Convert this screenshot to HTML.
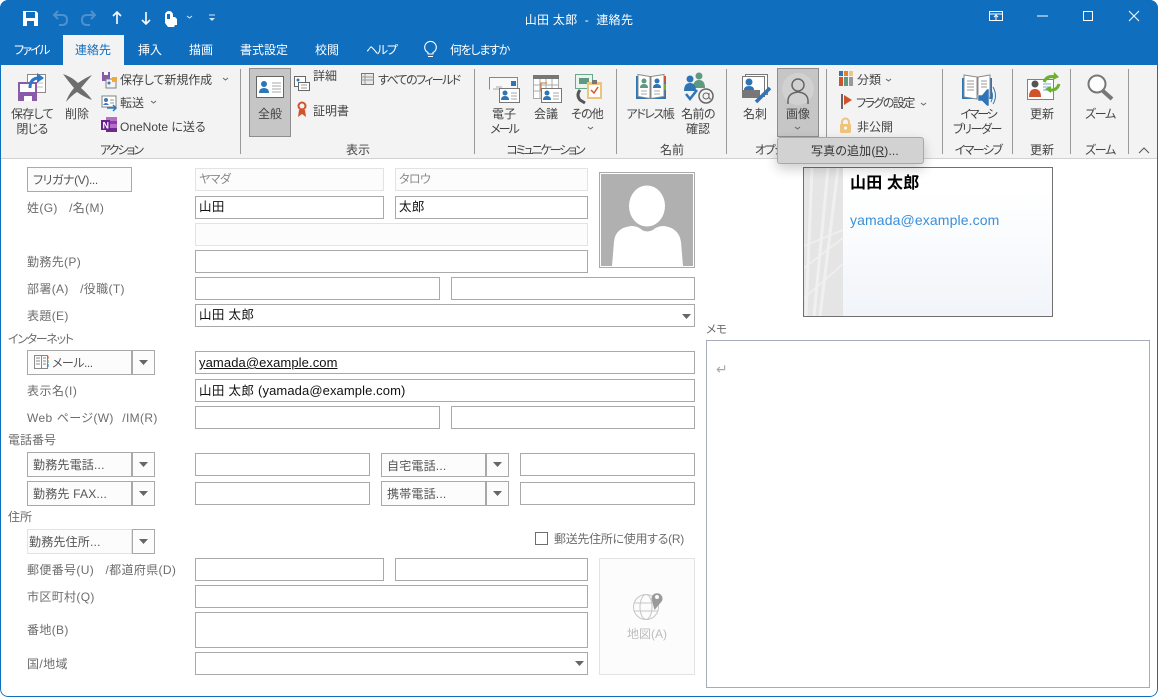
<!DOCTYPE html>
<html lang="ja"><head><meta charset="utf-8"><title>山田 太郎 - 連絡先</title>
<style>
html,body{margin:0;padding:0;background:#fff}
body{width:1158px;height:697px;overflow:hidden;position:relative;font-family:"Liberation Sans","Noto Sans CJK JP",sans-serif;font-size:12px;color:#444;font-feature-settings:"palt"}
#win{position:absolute;left:0;top:0;width:1158px;height:697px;background:#fff;border-radius:8px;overflow:hidden;box-sizing:border-box}
#win:after{content:"";position:absolute;inset:0;border:1px solid #106ebe;border-radius:8px;pointer-events:none}
.abs{position:absolute;box-sizing:border-box}
.t{position:absolute;white-space:nowrap;line-height:16px;height:16px}
.c{text-align:center;width:120px}
.w{color:#fff}
.l{color:#6d6d6d;letter-spacing:.35px;word-spacing:2px}
.i{position:absolute;box-sizing:border-box;border:1px solid #a9a9a9;background:#fff;color:#111;padding:0 3px;line-height:21px;white-space:nowrap;font-size:12.5px;letter-spacing:.35px}
.i span{font-size:13px;letter-spacing:.1px}
.d{border-color:#e3e3e3;background:#fcfcfc;color:#8a8a8a;font-size:12px;letter-spacing:-.6px}
.b{position:absolute;box-sizing:border-box;border:1px solid #a9a9a9;background:#fcfcfc;color:#555;line-height:24px;padding-left:5px;white-space:nowrap;letter-spacing:.2px}
.s{position:absolute;top:69px;width:1px;height:85px;background:#999}
.sel{position:absolute;box-sizing:border-box;background:#c6c6c6;border:1px solid #8e8e8e}
</style></head><body>
<div id="win">
<div class="abs" style="left:0;top:0;width:1158px;height:65px;background:#106ebe"></div>
<div class="abs" style="left:63px;top:35px;width:61px;height:31px;background:#f3f3f3"></div>
<div class="abs" style="left:1px;top:65px;width:1156px;height:94px;background:#f3f3f3;border-bottom:1px solid #d2d2d2"></div>

<div class="t w c" style="left:519px;top:12px;letter-spacing:.3px">山田 太郎 &nbsp;-&nbsp; 連絡先</div>
<div class="t w" style="left:14px;top:42px;letter-spacing:-1.7px">ファイル</div>
<div class="t" style="left:75px;top:42px;color:#106ebe">連絡先</div>
<div class="t w" style="left:138px;top:42px">挿入</div>
<div class="t w" style="left:189px;top:42px">描画</div>
<div class="t w" style="left:240px;top:42px">書式設定</div>
<div class="t w" style="left:315px;top:42px">校閲</div>
<div class="t w" style="left:366px;top:42px;letter-spacing:-1.3px">ヘルプ</div>
<div class="t w" style="left:450px;top:42px;letter-spacing:-1.3px">何をしますか</div>

<div class="sel" style="left:249px;top:68px;width:42px;height:69px"></div>
<div class="sel" style="left:777px;top:68px;width:42px;height:69px"></div>
<div class="s" style="left:240px"></div><div class="s" style="left:474px"></div><div class="s" style="left:616px"></div><div class="s" style="left:726px"></div><div class="s" style="left:826px"></div><div class="s" style="left:942px"></div><div class="s" style="left:1012px"></div><div class="s" style="left:1070px"></div><div class="s" style="left:1128px"></div>

<div class="t c" style="left:-28px;top:106px;letter-spacing:-.7px">保存して</div>
<div class="t c" style="left:-28px;top:121px;letter-spacing:-.7px">閉じる</div>
<div class="t c" style="left:17px;top:106px">削除</div>
<div class="t" style="left:120px;top:72px;letter-spacing:-.1px">保存して新規作成</div>
<div class="t" style="left:120px;top:95px">転送</div>
<div class="t" style="left:120px;top:119px">OneNote に送る</div>
<div class="t c" style="left:210px;top:106px">全般</div>
<div class="t" style="left:313px;top:68px">詳細</div>
<div class="t" style="left:313px;top:103px">証明書</div>
<div class="t" style="left:378px;top:72px;letter-spacing:-1.6px">すべてのフィールド</div>
<div class="t c" style="left:444px;top:106px">電子</div>
<div class="t c" style="left:444px;top:121px;letter-spacing:-2px">メール</div>
<div class="t c" style="left:486px;top:106px">会議</div>
<div class="t c" style="left:527px;top:106px;letter-spacing:-.8px">その他</div>
<div class="t c" style="left:590px;top:106px;letter-spacing:-1.4px">アドレス帳</div>
<div class="t c" style="left:638px;top:106px;letter-spacing:-.6px">名前の</div>
<div class="t c" style="left:638px;top:121px">確認</div>
<div class="t c" style="left:695px;top:106px">名刺</div>
<div class="t c" style="left:738px;top:106px">画像</div>
<div class="t" style="left:857px;top:72px">分類</div>
<div class="t" style="left:856px;top:95px;letter-spacing:-1.5px">フラグの設定</div>
<div class="t" style="left:857px;top:119px">非公開</div>
<div class="t c" style="left:918px;top:106px;letter-spacing:-2.2px">イマーシ</div>
<div class="t c" style="left:917px;top:121px;letter-spacing:-1.4px">ブリーダー</div>
<div class="t c" style="left:982px;top:106px">更新</div>
<div class="t c" style="left:1040px;top:106px;letter-spacing:-1.3px">ズーム</div>

<div class="t c" style="left:61px;top:142px;letter-spacing:-2px">アクション</div>
<div class="t c" style="left:298px;top:142px">表示</div>
<div class="t c" style="left:485px;top:142px;letter-spacing:-2.1px">コミュニケーション</div>
<div class="t c" style="left:612px;top:142px">名前</div>
<div class="t" style="left:755px;top:142px;letter-spacing:-1.5px">オプション</div>
<div class="t c" style="left:918px;top:142px;letter-spacing:-1.6px">イマーシブ</div>
<div class="t c" style="left:982px;top:142px">更新</div>
<div class="t c" style="left:1040px;top:142px;letter-spacing:-1.3px">ズーム</div>

<!-- Form -->
<div class="b" style="left:27px;top:167px;width:105px;height:25px;letter-spacing:-.4px">フリガナ(V)...</div>
<div class="i d" style="left:195px;top:168px;width:189px;height:23px">ヤマダ</div>
<div class="i d" style="left:395px;top:168px;width:193px;height:23px">タロウ</div>
<div class="t l" style="left:27px;top:200px">姓(G) &nbsp;/名(M)</div>
<div class="i" style="left:195px;top:196px;width:189px;height:23px">山田</div>
<div class="i" style="left:395px;top:196px;width:193px;height:23px">太郎</div>
<div class="i d" style="left:195px;top:223px;width:393px;height:23px"></div>
<div class="t l" style="left:27px;top:254px">勤務先(P)</div>
<div class="i" style="left:195px;top:250px;width:393px;height:23px"></div>
<div class="t l" style="left:27px;top:281px">部署(A) &nbsp;/役職(T)</div>
<div class="i" style="left:195px;top:277px;width:245px;height:23px"></div>
<div class="i" style="left:451px;top:277px;width:244px;height:23px"></div>
<div class="t l" style="left:27px;top:308px">表題(E)</div>
<div class="i" style="left:195px;top:304px;width:500px;height:23px">山田 太郎</div>
<div class="t" style="left:8px;top:331px;color:#6d6d6d;letter-spacing:-1.3px">インターネット</div>
<div class="t" style="left:706px;top:322px;color:#6d6d6d;font-size:11.5px">メモ</div>

<div class="b" style="left:27px;top:350px;width:105px;height:25px;padding-left:24px;letter-spacing:-.5px">メール...</div>
<div class="b" style="left:132px;top:350px;width:23px;height:25px"></div>
<div class="i" style="left:195px;top:351px;width:500px;height:23px"><span style="text-decoration:underline">yamada@example.com</span></div>
<div class="t l" style="left:27px;top:383px;letter-spacing:.5px">表示名(I)</div>
<div class="i" style="left:195px;top:379px;width:500px;height:23px">山田 太郎 <span>(yamada@example.com)</span></div>
<div class="t l" style="left:27px;top:410px;word-spacing:.6px">Web ページ(W) &nbsp;/IM(R)</div>
<div class="i" style="left:195px;top:406px;width:245px;height:23px"></div>
<div class="i" style="left:451px;top:406px;width:244px;height:23px"></div>
<div class="t" style="left:8px;top:432px;color:#6d6d6d">電話番号</div>

<div class="b" style="left:27px;top:452px;width:105px;height:25px">勤務先電話...</div>
<div class="b" style="left:132px;top:452px;width:23px;height:25px"></div>
<div class="i" style="left:195px;top:453px;width:175px;height:23px"></div>
<div class="b" style="left:381px;top:453px;width:105px;height:24px">自宅電話...</div>
<div class="b" style="left:486px;top:453px;width:23px;height:24px"></div>
<div class="i" style="left:520px;top:453px;width:175px;height:23px"></div>
<div class="b" style="left:27px;top:481px;width:105px;height:25px">勤務先 FAX...</div>
<div class="b" style="left:132px;top:481px;width:23px;height:25px"></div>
<div class="i" style="left:195px;top:482px;width:175px;height:23px"></div>
<div class="b" style="left:381px;top:481px;width:105px;height:25px">携帯電話...</div>
<div class="b" style="left:486px;top:481px;width:23px;height:25px"></div>
<div class="i" style="left:520px;top:482px;width:175px;height:23px"></div>
<div class="t" style="left:8px;top:509px;color:#6d6d6d">住所</div>

<div class="b" style="left:27px;top:529px;width:105px;height:25px;border-color:#e3e3e3;padding-left:1px">勤務先住所...</div>
<div class="b" style="left:132px;top:529px;width:23px;height:25px"></div>
<div class="abs" style="left:535px;top:532px;width:13px;height:13px;border:1px solid #6d6d6d;background:#fff"></div>
<div class="t" style="left:554px;top:531px;color:#6d6d6d;letter-spacing:-.3px">郵送先住所に使用する(R)</div>
<div class="t l" style="left:27px;top:562px">郵便番号(U) &nbsp;/都道府県(D)</div>
<div class="i" style="left:195px;top:558px;width:189px;height:23px"></div>
<div class="i" style="left:395px;top:558px;width:193px;height:23px"></div>
<div class="t l" style="left:27px;top:589px">市区町村(Q)</div>
<div class="i" style="left:195px;top:585px;width:393px;height:23px"></div>
<div class="t l" style="left:27px;top:622px">番地(B)</div>
<div class="i" style="left:195px;top:612px;width:393px;height:36px"></div>
<div class="t l" style="left:27px;top:656px;letter-spacing:.4px">国/地域</div>
<div class="i" style="left:195px;top:652px;width:393px;height:23px"></div>
<div class="abs" style="left:599px;top:558px;width:96px;height:117px;border:1px solid #e3e3e3;background:#fcfcfc"></div>
<div class="t c" style="left:587px;top:626px;color:#bdbdbd">地図(A)</div>

<!-- Photo -->
<div class="abs" style="left:599px;top:172px;width:96px;height:96px;border:1px solid #aaa;background:#fff;padding:1px">
<svg width="92" height="92" viewBox="0 0 92 92" style="display:block"><rect width="92" height="92" fill="#b0b0b0"/><ellipse cx="46" cy="32" rx="18" ry="20.5" fill="#fff"/><path d="M11 92 L13 68 Q14 54 30 52 Q37 52 41 56 Q46 59 52 56 Q56 52 63 52 Q78 54 80 68 L82 92Z" fill="#fff"/></svg></div>

<!-- Card -->
<div class="abs" style="left:803px;top:167px;width:250px;height:150px;border:1px solid #707070;background:linear-gradient(#fff 15%,#f9fbfd 50%,#f1f4f9)"></div>
<div class="abs" style="left:804px;top:168px;width:39px;height:148px;background:#e5e5e5;overflow:hidden">
<svg width="39" height="148"><g stroke="#f0f0f0" fill="none"><path d="M8 0L2 148M24 0L10 148M34 0L16 148" stroke-width="3"/><path d="M0 78L39 62M0 100L39 70M0 130L39 96" stroke-width="1.500"/></g></svg></div>
<div class="t" style="left:850px;top:176px;font-size:16px;font-weight:bold;color:#000;letter-spacing:.2px">山田 太郎</div>
<div class="t" style="left:850px;top:212px;font-size:14px;color:#3a8fd8;letter-spacing:.12px">yamada@example.com</div>

<!-- Memo -->
<div class="abs" style="left:706px;top:340px;width:444px;height:348px;border:1px solid #a6adb8;background:#fff"></div>
<div class="t" style="left:716px;top:361px;color:#aaa;font-size:14px">↵</div>

<!-- Menu -->
<div class="abs" style="left:777px;top:137px;width:147px;height:27px;background:#d2d2d2;border:1px solid #a8a8a8;border-radius:3px;box-shadow:0 5px 12px rgba(0,0,0,.2)"></div>
<div class="t" style="left:811px;top:143px;color:#333;letter-spacing:.15px">写真の追加(<u>R</u>)...</div>

<!-- Icons -->
<svg class="abs" style="left:0;top:0" width="1158" height="697" viewBox="0 0 1158 697" fill="none">
<!-- QAT -->
<g fill="#fff"><path d="M23 11h13l2 2v13H23zM26 12v6h9v-6zM27 21v5h7v-5z" fill-rule="evenodd"/></g>
<g stroke="#4e91cc" stroke-width="2"><path d="M54 15h8q5 0 5 5t-5 5h-3M58 11l-4 4 4 4"/><path d="M95 15h-8q-5 0-5 5t5 5h3M91 11l4 4-4 4"/></g>
<g stroke="#fff" stroke-width="1.600"><path d="M117 24V12M113 16l4-4 4 4M146 12v12M142 20l4 4 4-4"/></g>
<path d="M165 23v-8a4 4 0 1 1 8 0v2h2l2 2v6h-2l-1 2h-6z M167 14v5h3v-5z" fill="#fff" fill-rule="evenodd"/>
<path d="M187 16l2.500 2 2.500-2M209 15h6" stroke="#d5e5f3"/>
<path d="M209 18h6l-3 3z" fill="#d5e5f3"/>
<!-- Caption buttons -->
<g stroke="#fff"><rect x="989.500" y="11.500" width="13" height="9"/><path d="M989 14h14M996 20v-4M994 17l2-2 2 2"/><path d="M1037 16h11"/><rect x="1083.500" y="11.500" width="9" height="9"/><path d="M1129 11l10 10M1139 11l-10 10"/></g>
<!-- lightbulb -->
<path d="M428 54v-1.500a5.800 5.800 0 1 1 5 0V54zM428 56.500h5" stroke="#fff" stroke-width="1.100"/>

<!-- Save & close -->
<rect x="27.500" y="74.500" width="18" height="18" fill="#fff" stroke="#8a8a8a"/><path d="M37 79h6M37 83h6M37 87h6" stroke="#bbb"/>
<path d="M18 82h19v19H18z" fill="#8a5aab"/><path d="M20 84h15v8H20z" fill="#fff"/><rect x="24" y="96" width="8" height="5" fill="#fff"/>
<path d="M30 88q0-10 9-10" stroke="#2b79c2" stroke-width="3"/><path d="M37 73l7 5-7 5z" fill="#2b79c2"/>
<!-- Delete -->
<path d="M63 74Q72 77 78 83Q85 78 92 75Q86 82 81 88Q88 94 92 100Q84 97 77 92Q71 96 66 102Q68 95 74 88Q68 81 63 74Z" fill="#6e6e6e"/>
<!-- save new -->
<rect x="102" y="72" width="8" height="9" fill="#8a5aab"/><rect x="104" y="72" width="4" height="3" fill="#fff"/><rect x="106" y="79" width="10" height="9" fill="#f3f3f3" stroke="#808080"/><rect x="112" y="77" width="5" height="5" fill="#f0a93c"/><circle cx="109" cy="83" r="1.500" fill="#3b78b5"/>
<path d="M223 78l2.500 2 2.500-2M151 101l2.500 2 2.500-2" stroke="#666"/>
<!-- forward -->
<rect x="102" y="96" width="14" height="11" fill="#fff" stroke="#808080"/><circle cx="106" cy="100" r="2" fill="#3b78b5"/><path d="M103 105q3-4 6 0z" fill="#3b78b5"/><path d="M110 100h4M110 103h4" stroke="#999"/><path d="M107 108h8M113 105l3 3-3 3" stroke="#2b79c2" stroke-width="1.500"/>
<!-- OneNote -->
<rect x="106" y="117" width="11" height="15" fill="#b470c8"/><rect x="106" y="121" width="11" height="3" fill="#8a3ca6"/><rect x="106" y="128" width="11" height="4" fill="#6b2a8c"/><rect x="101" y="120" width="9" height="10" fill="#6b1f91"/><text x="102.500" y="128.500" font-size="9" font-weight="bold" fill="#fff" font-family="Liberation Sans">N</text>
<!-- general -->
<rect x="256.500" y="76.500" width="27" height="21" fill="#fff" stroke="#666"/><circle cx="264" cy="84" r="3" fill="#2f75b5"/><path d="M259 93q0-5 5-5t5 5z" fill="#2f75b5"/><path d="M272 83h9M272 86h9M272 89h9M272 92h9" stroke="#aaa"/>
<!-- detail -->
<rect x="294.500" y="76.500" width="11" height="10" fill="#fff" stroke="#666"/><circle cx="298" cy="80" r="1.500" fill="#2f75b5"/><rect x="298.500" y="82.500" width="11" height="8" fill="#fff" stroke="#666"/><path d="M301 85h6M301 88h6" stroke="#999"/>
<rect x="361.500" y="73.500" width="12" height="11" fill="#e9e9e9" stroke="#777"/><path d="M361 77h13M361 80h13M365 74v10" stroke="#999"/>
<!-- cert -->
<circle cx="302" cy="106" r="3.500" stroke="#d0532c" stroke-width="2"/><path d="M299 110l-1 7 4-3 4 3-1-7" fill="#d0532c"/>
<!-- email -->
<path d="M489.500 89.500v-12h28v12" fill="#f8f8f8" stroke="#888"/><rect x="511" y="81" width="5" height="5" fill="#2f75b5"/><path d="M496 87h6M493 89h7" stroke="#aaa"/>
<g id="cd"><rect x="499.500" y="88.500" width="20" height="14" fill="#fff" stroke="#777"/><circle cx="505" cy="93" r="2.500" fill="#2f75b5"/><path d="M501 100q0-4 4-4t4 4z" fill="#2f75b5"/><path d="M511 93h6M511 96h6M511 99h6" stroke="#aaa"/></g>
<!-- meeting -->
<rect x="533.500" y="75.500" width="25" height="23" fill="#fff" stroke="#aaa"/><rect x="533" y="75" width="26" height="4" fill="#777"/><path d="M540 79v19M546 79v19M552 79v19M533 85h26M533 91h26" stroke="#aaa"/><path d="M541 91v-8h6" stroke="#d9702c"/>
<use href="#cd" x="42"/>
<!-- other -->
<rect x="575.500" y="74.500" width="17" height="14" fill="#eaf3ee" stroke="#6aa78c"/><rect x="579" y="78" width="10" height="6" fill="#5d9a80"/>
<path d="M580 90q-4 5 0 10l5 3" stroke="#555" stroke-width="3"/>
<rect x="587" y="82" width="15" height="17" fill="#f0c37d" /><rect x="589" y="85" width="11" height="12" fill="#fff"/><rect x="592" y="80" width="5" height="4" fill="#777"/><path d="M591 90l3 3 4-6" stroke="#d9532c" stroke-width="1.500"/>
<path d="M588 127l2.500 2 2.500-2" stroke="#666"/>
<!-- address book -->
<path d="M636 76h30v23h-30z" fill="#2f75b5"/><path d="M638 74.500l12 2v22l-12-2zM664 74.500l-13 2v22l13-2z" fill="#fff" stroke="#888"/><rect x="664" y="76" width="2" height="6" fill="#d0532c"/><rect x="664" y="84" width="2" height="6" fill="#7aa83c"/>
<circle cx="644" cy="81" r="2.500" fill="#5d9a80"/><path d="M640 88q0-4 4-4t4 4z" fill="#5d9a80"/><circle cx="657" cy="81" r="2.500" fill="#2f75b5"/><path d="M653 88q0-4 4-4t4 4z" fill="#2f75b5"/><path d="M641 91h6M641 94h6M654 91h6M654 94h6" stroke="#aaa"/>
<!-- check name -->
<circle cx="699" cy="76" r="3.500" fill="#5d9a80"/><path d="M693 88q0-8 6-8t6 8z" fill="#5d9a80"/><circle cx="690" cy="79" r="3.500" fill="#2f75b5"/><path d="M684 91q0-8 6-8t6 8z" fill="#2f75b5"/>
<path d="M686 94l4 5 7-9" stroke="#2f75b5" stroke-width="2.500"/><circle cx="706" cy="96" r="7" stroke="#666" stroke-width="1.500"/><circle cx="706" cy="96" r="3" stroke="#666"/><path d="M709 93v4q0 2 2 2" stroke="#666"/>
<!-- business card -->
<rect x="745.500" y="74.500" width="22" height="20" fill="#fff" stroke="#777"/><rect x="742.500" y="76.500" width="22" height="20" fill="#fff" stroke="#777"/><circle cx="749" cy="82" r="3.500" fill="#2f75b5"/><path d="M744 90q0-4 5-4t5 4z" fill="#2f75b5"/><rect x="742" y="90" width="18" height="8" fill="#777"/>
<path d="M756 102l14-14" stroke="#2f75b5" stroke-width="3.500"/>
<!-- picture -->
<circle cx="798" cy="89" r="16" fill="#d1d1d1"/><circle cx="798" cy="85" r="6" stroke="#666" stroke-width="1.500"/><path d="M788 104v-3q0-8 10-9 10 1 10 9v3" stroke="#666" stroke-width="1.500"/>
<path d="M795 127l2.500 2 2.500-2" stroke="#666"/>
<!-- categorize -->
<rect x="839" y="71" width="4" height="5" fill="#2f75b5"/><rect x="844" y="71" width="4" height="5" fill="#e0822e"/><rect x="849" y="71" width="4" height="5" fill="#ecc87d"/><rect x="839" y="77" width="4" height="9" fill="#d0532c"/><rect x="844" y="77" width="4" height="9" fill="#5d9a80"/><rect x="849" y="77" width="4" height="9" fill="#999"/>
<path d="M886 79l2.500 2 2.500-2M921 103l2.500 2 2.500-2" stroke="#666"/>
<path d="M842 94v15" stroke="#666" stroke-width="2"/><path d="M844 95l8 5-8 5z" fill="#d0532c"/>
<rect x="840" y="124" width="11" height="9" rx="1" fill="#f0c37d"/><path d="M842 124v-2a3.500 3.500 0 0 1 7 0v2" stroke="#f0c37d" stroke-width="2"/><circle cx="845.500" cy="128" r="1.500" fill="#fff"/>
<!-- immersive -->
<path d="M962 78h30v21h-30z" fill="#2f75b5"/><path d="M964 75l13 2v22l-13-2zM990 75l-12 2v22l12-2z" fill="#fff" stroke="#888"/><path d="M967 81h7M967 84h7M967 87h7M967 90h7M981 81h6M981 84h6M981 87h6" stroke="#999"/>
<path d="M978 95h4l5-6h2v17h-2l-5-5h-4z" fill="#2f75b5" stroke="#fff" stroke-width=".5"/><path d="M991 90q3 6 0 12M993 87q5 9 0 17" stroke="#2f75b5"/>
<!-- update -->
<rect x="1027.500" y="79.500" width="26" height="20" fill="#fff" stroke="#6d85a5"/><circle cx="1035" cy="84" r="3.500" fill="#555"/><path d="M1029 97q0-8 6-8t6 8z" fill="#d0532c"/><path d="M1043 84h8M1043 87h8M1043 90h8" stroke="#7aa7d0"/>
<path d="M1044 82q3-7 11-5M1059 84q-2 7-10 6" stroke="#6bb02e" stroke-width="3"/><path d="M1054 72l5 5-6 3zM1051 93l-6-4 6-3z" fill="#6bb02e"/>
<!-- zoom -->
<circle cx="1097" cy="84" r="8.500" fill="#fdfdfd" stroke="#777" stroke-width="2"/><path d="M1103 91l9 8" stroke="#777" stroke-width="4"/>
<path d="M1139 153l5-5 5 5" stroke="#555"/>
<!-- dropdown arrows -->
<g fill="#666"><path d="M139 360h9l-4.500 5zM139 462h9l-4.500 5zM139 491h9l-4.500 5zM139 539h9l-4.500 5zM493 462h9l-4.500 5zM493 491h9l-4.500 5zM682 314h9l-4.500 5zM575 661h9l-4.500 5z"/></g>
<!-- mail-icon -->
<path d="M34.500 355.500h7v13h-7zM41.500 355.500h6v13h-6zM36 358h4M36 361h4M36 364h4M43 358h3M43 361h3M43 364h3" stroke="#8a8a8a"/><path d="M48 356v3" stroke="#d0532c"/><path d="M48 360v3" stroke="#5d9a80"/><path d="M48 364v3" stroke="#2f75b5"/>
<!-- map icon -->
<g stroke="#c6c6c6"><circle cx="646" cy="607" r="12.500"/><ellipse cx="646" cy="607" rx="6" ry="12.500"/><path d="M634 603h24M634 611h24"/></g>
<path d="M654.500 610l-2.500-9a5.500 5.500 0 1 1 10 0z" fill="#9a9a9a"/><circle cx="657" cy="597" r="2" fill="#fcfcfc"/>
</svg>
</div>
</body></html>
